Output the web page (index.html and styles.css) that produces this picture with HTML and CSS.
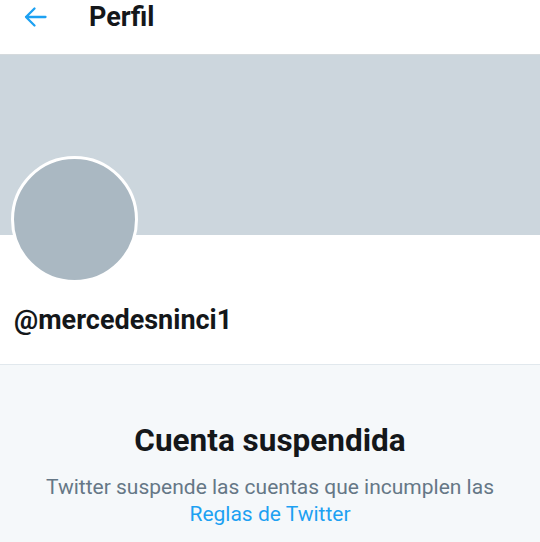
FILE: index.html
```html
<!DOCTYPE html>
<html lang="es">
<head>
<meta charset="utf-8">
<link rel="stylesheet" href="styles.css">
</head>
<body>
<header class="topbar">
  <svg class="back" viewBox="0 0 24 24" width="24" height="24"><path d="M22.5 12H3 M11.5 3.5L3 12l8.5 8.5" fill="none" stroke="#1da1f2" stroke-width="2.3" stroke-linecap="round" stroke-linejoin="round"/></svg>
  <h1 class="title">Perfil</h1>
</header>
<section class="profile">
  <div class="banner"></div>
  <div class="info">
    <div class="avatar"></div>
    <div class="handle">@mercedesninci1</div>
  </div>
</section>
<section class="suspended">
  <h2 class="s-title">Cuenta suspendida</h2>
  <p class="s-text">Twitter suspende las cuentas que incumplen las <a class="s-link">Reglas de Twitter</a></p>
</section>
</body>
</html>
```
FILE: styles.css
```css
* { box-sizing: border-box; }
html, body { margin: 0; padding: 0; }
body {
  font-family: Roboto, "Noto Sans", sans-serif;
  background: #f5f8fa;
  width: 540px;
  height: 542px;
  overflow: hidden;
}
.topbar {
  height: 55px;
  background: #fff;
  border-bottom: 1px solid #d5dadd;
  display: flex;
  align-items: flex-start;
  padding: 4px 0 0 23px;
}
.back { margin-top: 1px; }
.title {
  margin: 0 0 0 42px;
  font-size: 27px;
  font-weight: 700;
  line-height: 26px;
  color: #14171a;
}
.profile {
  background: #fff;
  border-bottom: 1px solid #e1e8ed;
}
.banner {
  height: 180px;
  background: #ccd6dd;
}
.info {
  display: flex;
  flex-direction: column;
  padding: 0 14px 0 11px;
  height: 129px;
}
.avatar {
  width: 127px;
  height: 127px;
  border-radius: 50%;
  background: #aab8c2;
  border: 3px solid #fff;
  margin-top: -79px;
}
.handle {
  margin-top: 21px;
  font-size: 27px;
  font-weight: 700;
  color: #14171a;
  line-height: 32px;
  padding-left: 3px;
}
.suspended {
  text-align: center;
  padding-top: 57px;
}
.s-title {
  margin: 0;
  font-size: 31.5px;
  font-weight: 700;
  color: #14171a;
  line-height: 38px;
}
.s-text {
  margin: 14px 0 0;
  font-size: 21px;
  line-height: 27px;
  color: #657786;
  padding: 0 30px;
}
.s-link { color: #1da1f2; }
```
